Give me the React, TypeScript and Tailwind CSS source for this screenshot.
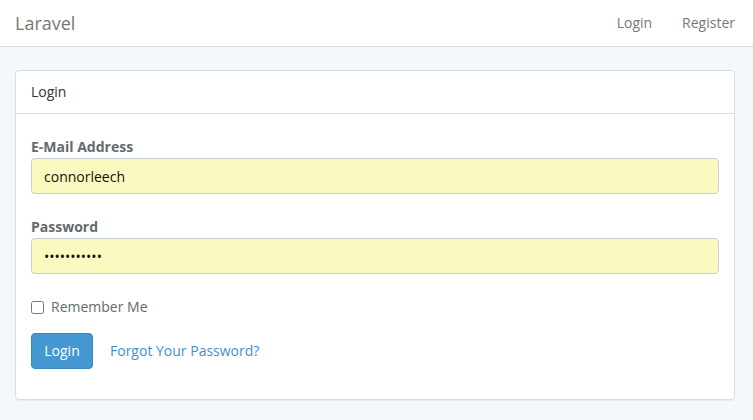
import { useState } from "react";

export default function App() {
  const [remember, setRemember] = useState(false);

  return (
    <div
      className="min-h-[420px] bg-[#f5f8fa] text-[14px] leading-[22px] text-[#636b6f]"
      style={{ fontFamily: '"Open Sans", "Liberation Sans", sans-serif' }}
    >
      {/* Navbar */}
      <nav className="flex h-[47px] items-center justify-between border-b border-[#d3e0e9] bg-white pl-[15px] pr-[3px]">
        <a className="text-[18px] text-[#777]">Laravel</a>
        <div className="flex text-[14px] text-[#777]">
          <a className="px-[15px]">Login</a>
          <a className="px-[15px]">Register</a>
        </div>
      </nav>

      {/* Panel */}
      <main className="pl-[15px] pr-[18px] pt-[23px]">
        <div className="rounded-[4px] border border-[#d3e0e9] bg-white shadow-[0_1px_1px_rgba(0,0,0,0.05)]">
          <div className="border-b border-[#d3e0e9] px-[15px] py-[10px] text-[#333]">Login</div>

          <form className="px-[15px] py-[15px]" onSubmit={(e) => e.preventDefault()}>
            <div className="mb-[15px]">
              <label className="block pt-[7px] font-bold">E-Mail Address</label>
              <input
                readOnly
                value="connorleech"
                className="block h-[36px] w-full rounded-[4px] border border-[#c9cdd0] bg-[#fafac0] px-[12px] text-[14px] text-[#111] outline-none"
              />
            </div>

            <div className="mb-[15px]">
              <label className="block pt-[7px] font-bold">Password</label>
              <input
                readOnly
                type="password"
                value="secretsecre"
                className="block h-[36px] w-full rounded-[4px] border border-[#c9cdd0] bg-[#fafac0] px-[12px] text-[14px] text-[#111] outline-none"
              />
            </div>

            <div className="mb-[15px] pt-[7px]">
              <label className="flex items-center">
                <input
                  type="checkbox"
                  checked={remember}
                  onChange={(e) => setRemember(e.target.checked)}
                  className="m-0 h-[13px] w-[13px]"
                />
                <span className="ml-[7px]">Remember Me</span>
              </label>
            </div>

            <div className="mb-[15px] flex items-center">
              <button
                type="submit"
                className="h-[36px] w-[62px] rounded-[4px] border border-[#3a89c0] bg-[#4497d0] text-white"
              >
                Login
              </button>
              <a className="ml-[17px] text-[#3f8fcb]">Forgot Your Password?</a>
            </div>
          </form>
        </div>
      </main>
    </div>
  );
}
